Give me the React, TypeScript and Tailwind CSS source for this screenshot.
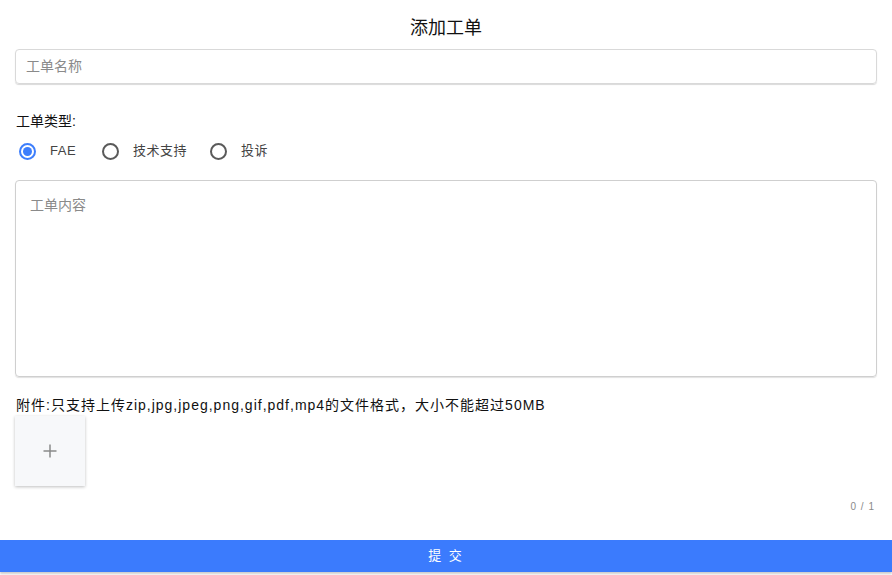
import React, { useState } from "react";

export default function App() {
  const [type, setType] = useState("FAE");
  const options = [
    { v: "FAE", w: "w-[83px]" },
    { v: "技术支持", w: "w-[108px]" },
    { v: "投诉", w: "w-[70px]" },
  ];
  return (
    <div className="w-[892px] h-[575px] bg-white overflow-hidden flex flex-col font-['Liberation_Sans','Noto_Sans_CJK_SC',sans-serif] text-[#222]">
      <div className="h-[49px] pt-[16px] text-center text-[18px] leading-[24px] text-[#111]">添加工单</div>
      <div className="px-[15px]">
        <div className="h-[35px] rounded-[4px] border border-[#d9d9d9] shadow-[0_1px_1px_rgba(0,0,0,0.15)] flex items-center px-[10px] text-[14px] text-[#8a8a8a]">
          工单名称
        </div>
      </div>
      <div className="pl-[16px] mt-[29px] text-[14px] leading-[16px] text-[#111]">工单类型:</div>
      <div className="pl-[19px] mt-[13px] flex items-center h-[18px]">
        {options.map((o) => (
          <div key={o.v} className={`flex items-center ${o.w} cursor-pointer`} onClick={() => setType(o.v)}>
            {type === o.v ? (
              <div className="w-[17px] h-[17px] rounded-full border-2 border-[#3d7efc] flex items-center justify-center">
                <div className="w-[9px] h-[9px] rounded-full bg-[#3d7efc]" />
              </div>
            ) : (
              <div className="w-[17px] h-[17px] rounded-full border-2 border-[#5a5a5a]" />
            )}
            <span className="ml-[14px] text-[13px] text-[#444] tracking-[0.5px]">{o.v}</span>
          </div>
        ))}
      </div>
      <div className="px-[15px] mt-[20px]">
        <div className="h-[197px] rounded-[4px] border border-[#cfcfcf] shadow-[0_1px_1px_rgba(0,0,0,0.12)] px-[14px] pt-[14px] text-[14px] text-[#8a8a8a]">
          工单内容
        </div>
      </div>
      <div className="pl-[16px] mt-[19px] text-[14px] leading-[18px] text-[#111] tracking-[1px] whitespace-nowrap">
        附件:只支持上传zip,jpg,jpeg,png,gif,pdf,mp4的文件格式，大小不能超过50MB
      </div>
      <div className="pl-[15px] mt-[2px]">
        <div className="w-[70px] h-[70px] bg-[#f7f8fa] shadow-[0_1px_3px_rgba(0,0,0,0.25)] flex items-center justify-center">
          <svg width="14" height="14" viewBox="0 0 14 14">
            <path d="M7 0.5V13.5M0.5 7H13.5" stroke="#8a8a8a" strokeWidth="1.5" />
          </svg>
        </div>
      </div>
      <div className="flex justify-end pr-[17px] mt-[15px] text-[10px] leading-[12px] text-[#8a8a8a] tracking-[1px]">0 / 1</div>
      <div className="mt-[27px] h-[32px] bg-[#3b7bfd] shadow-[0_2px_2px_rgba(0,0,0,0.2)] flex items-center justify-center text-white text-[13px] tracking-[2px]">
        提 交
      </div>
    </div>
  );
}
